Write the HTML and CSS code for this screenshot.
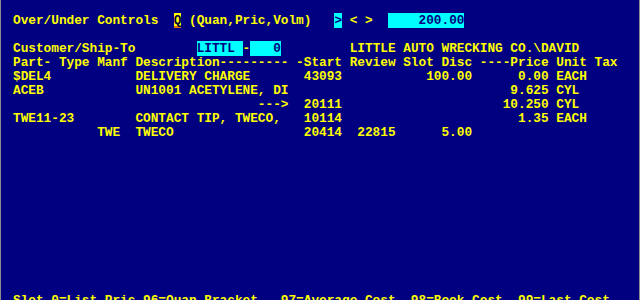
FILE: index.html
```html
<!DOCTYPE html>
<html lang="en">
<head>
    <meta charset="UTF-8">
    <title>Over/Under Controls</title>
    <link rel="stylesheet" href="styles.css">
</head>
<body>
    <div class="screen">
        <div class="line">Over/Under Controls  <span class="cursor">Q</span> (Quan,Pric,Volm)   <span class="field">&gt;</span> &lt; &gt;  <span class="field">    200.00</span></div>
        <div class="line"> </div>
        <div class="line">Customer/Ship-To        <span class="field">LITTL </span>-<span class="field">   0</span>         LITTLE AUTO WRECKING CO.\DAVID</div>
        <div class="line">Part- Type Manf Description--------- -Start Review Slot Disc ----Price Unit Tax</div>
        <div class="line">$DEL4           DELIVERY CHARGE       43093           100.00      0.00 EACH</div>
        <div class="line">ACEB            UN1001 ACETYLENE, DI                             9.625 CYL</div>
        <div class="line">                                ---&gt;  20111                     10.250 CYL</div>
        <div class="line">TWE11-23        CONTACT TIP, TWECO,   10114                       1.35 EACH</div>
        <div class="line">           TWE  TWECO                 20414  22815      5.00</div>

        <!-- строка подсказок внизу экрана -->
        <div class="line status">Slot 0=List Pric 96=Quan Bracket   97=Average Cost  98=Book Cost  99=Last Cost</div>
    </div>
</body>
</html>
```

FILE: styles.css
```css
body {
    margin: 0;
    padding: 0;
    background-color: #000080;
}
.screen {
    width: 640px;
    height: 300px;
    box-sizing: border-box;
    padding: 14px 0 0 12px;
    border-left: 1px solid #8c8c8c;
    border-right: 1px solid #8c8c8c;
    background-color: #000080;
    color: #ffff00;
    font-family: 'Liberation Mono', 'Courier New', monospace;
    font-size: 12.76px;
    font-weight: bold;
    overflow: hidden;
}
.line {
    height: 14px;
    line-height: 14px;
    white-space: pre;
}
.field {
    background-color: #00ffff;
    color: #000080;
}
.cursor {
    background-color: #ffff00;
    color: #000040;
    box-shadow: inset 0 -2px 0 #e07000;
}
.status {
    margin-top: 154px;
}
```
